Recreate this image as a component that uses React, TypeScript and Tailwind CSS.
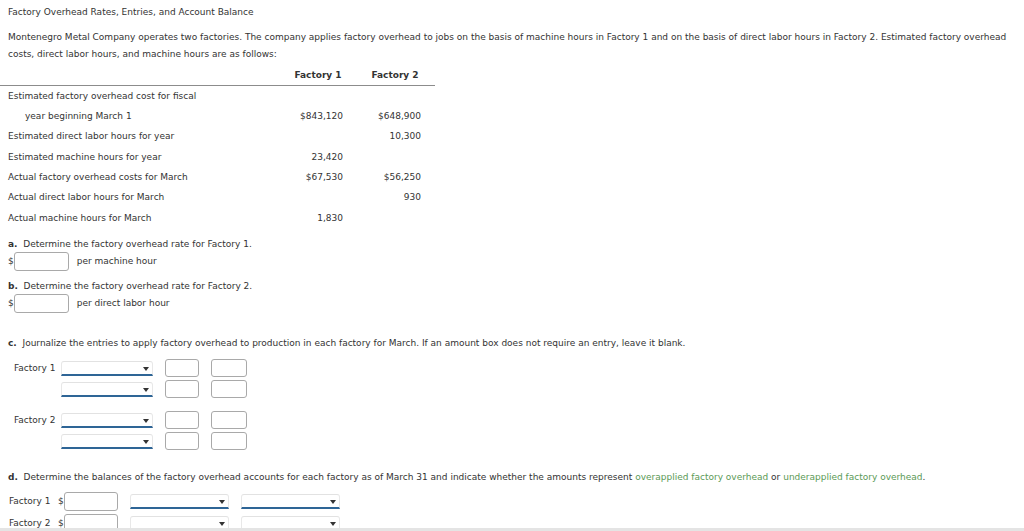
import React from 'react';

const rows: { label: string; indent?: boolean; f1: string; f2: string }[] = [
  { label: 'Estimated factory overhead cost for fiscal', f1: '', f2: '' },
  { label: 'year beginning March 1', indent: true, f1: '$843,120', f2: '$648,900' },
  { label: 'Estimated direct labor hours for year', f1: '', f2: '10,300' },
  { label: 'Estimated machine hours for year', f1: '23,420', f2: '' },
  { label: 'Actual factory overhead costs for March', f1: '$67,530', f2: '$56,250' },
  { label: 'Actual direct labor hours for March', f1: '', f2: '930' },
  { label: 'Actual machine hours for March', f1: '1,830', f2: '' },
];

function Box({ w = 'w-[55px]', h = 'h-[19px]' }: { w?: string; h?: string }) {
  return <div className={`${w} ${h} border border-[#a9a9a9] rounded-[3px] bg-white shrink-0`} />;
}

function Select({ w }: { w: string }) {
  return (
    <div className={`${w} h-[15px] relative border-b-2 border-[#2e6596] rounded-t-[3px] border-t border-x border-t-[#e2e2e2] border-x-[#e8e8e8] shrink-0`}>
      <svg className="absolute right-[3px] top-[5px]" width="6" height="4" viewBox="0 0 6 4">
        <path d="M0 0h6L3 4z" fill="#333" />
      </svg>
    </div>
  );
}

function Amounts() {
  return (
    <div className="flex gap-[12px]">
      <Box w="w-[34px]" h="h-[18px]" />
      <Box w="w-[36px]" h="h-[18px]" />
    </div>
  );
}

export default function App() {
  return (
    <div className="w-[1024px] h-[531px] overflow-hidden bg-white text-[#333] text-[9px] leading-none relative" style={{ fontFamily: '"DejaVu Sans", Verdana, sans-serif' }}>
      <div className="px-2 pt-[8px] h-[17px]">Factory Overhead Rates, Entries, and Account Balance</div>

      <div className="px-2 pt-[12px] leading-[17px]">
        Montenegro Metal Company operates two factories. The company applies factory overhead to jobs on the basis of machine hours in Factory 1 and on the basis of direct labor hours in Factory 2. Estimated factory overhead costs, direct labor hours, and machine hours are as follows:
      </div>

      <div className="w-[435px] mt-[3px]">
        <div className="flex h-[20px] items-center border-b border-[#8c8c8c] font-bold">
          <div className="w-[288px]" />
          <div className="w-[60px] text-center">Factory 1</div>
          <div className="w-[78px] pl-[16px] text-center">Factory 2</div>
        </div>
        {rows.map((r) => (
          <div key={r.label} className="flex h-[20.33px] items-center">
            <div className={`w-[288px] ${r.indent ? 'pl-[25px]' : 'pl-2'}`}>{r.label}</div>
            <div className="w-[55px] text-right">{r.f1}</div>
            <div className="w-[78px] text-right">{r.f2}</div>
          </div>
        ))}
      </div>

      <div className="px-2 mt-[12px]">
        <div><span className="font-bold">a.</span>&nbsp; Determine the factory overhead rate for Factory 1.</div>
        <div className="flex items-center mt-[3px]">
          <span>$</span>
          <Box />
          <span className="ml-[8px]">per machine hour</span>
        </div>
        <div className="mt-[11px]"><span className="font-bold">b.</span>&nbsp; Determine the factory overhead rate for Factory 2.</div>
        <div className="flex items-center mt-[3px]">
          <span>$</span>
          <Box />
          <span className="ml-[8px]">per direct labor hour</span>
        </div>

        <div className="mt-[26px]"><span className="font-bold">c.</span>&nbsp; Journalize the entries to apply factory overhead to production in each factory for March. If an amount box does not require an entry, leave it blank.</div>

        <div className="mt-[11px] ml-[6px] flex flex-col gap-[3px]">
          <div className="flex items-center">
            <span className="w-[47px]">Factory 1</span>
            <Select w="w-[92px]" />
            <div className="ml-[12px]"><Amounts /></div>
          </div>
          <div className="flex items-center">
            <span className="w-[47px]" />
            <Select w="w-[92px]" />
            <div className="ml-[12px]"><Amounts /></div>
          </div>
          <div className="flex items-center mt-[10px]">
            <span className="w-[47px]">Factory 2</span>
            <Select w="w-[92px]" />
            <div className="ml-[12px]"><Amounts /></div>
          </div>
          <div className="flex items-center">
            <span className="w-[47px]" />
            <Select w="w-[92px]" />
            <div className="ml-[12px]"><Amounts /></div>
          </div>
        </div>

        <div className="mt-[23px]">
          <span className="font-bold">d.</span>&nbsp; Determine the balances of the factory overhead accounts for each factory as of March 31 and indicate whether the amounts represent{' '}
          <span className="text-[#5b9a56]">overapplied factory overhead</span> or{' '}
          <span className="text-[#5b9a56]">underapplied factory overhead</span>.
        </div>

        <div className="mt-[10px] ml-[1px] flex flex-col gap-[3px]">
          {['Factory 1', 'Factory 2'].map((f) => (
            <div key={f} className="flex items-center">
              <span className="w-[49px]">{f}</span>
              <span>$</span>
              <Box w="w-[54px]" h="h-[19px]" />
              <div className="ml-[12px] flex gap-[12px]">
                <Select w="w-[99px]" />
                <Select w="w-[99px]" />
              </div>
            </div>
          ))}
        </div>
      </div>
      <div className="absolute left-0 right-0 bottom-0 h-[3px] bg-[#e4e4e4]" />
    </div>
  );
}
